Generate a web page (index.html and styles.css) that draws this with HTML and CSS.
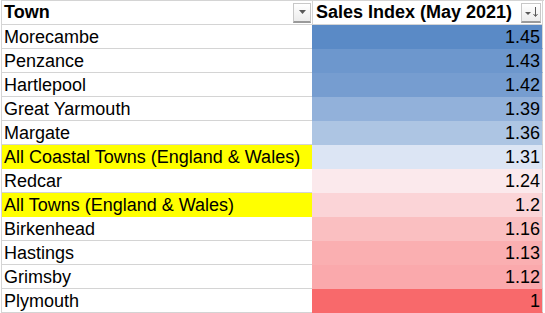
FILE: index.html
```html
<!DOCTYPE html>
<html lang="en">
<head>
    <meta charset="UTF-8">
    <title>Sales Index</title>
    <link rel="stylesheet" href="styles.css">
</head>
<body>
    <div class="sheet">
        <div class="row header">
            <div class="cell town">
                <span>Town</span>
                <span class="filter">
                    <svg width="7" height="4" viewBox="0 0 7 4"><path d="M0 0h7L3.5 4z" fill="#595959"/></svg>
                </span>
            </div>
            <div class="cell value">
                <span>Sales Index (May 2021)</span>
                <span class="filter sorted">
                    <svg width="16" height="14" viewBox="0 0 16 14"><path d="M2 7h6L5 10z" fill="#595959"/><path d="M12.5 2v9M10.5 9l2 2.5 2-2.5" stroke="#595959" stroke-width="1" fill="none"/></svg>
                </span>
            </div>
        </div>
        <div class="row">
            <div class="cell town">Morecambe</div>
            <div class="cell value" style="background-color: rgb(90,138,198)">1.45</div>
        </div>
        <div class="row">
            <div class="cell town">Penzance</div>
            <div class="cell value" style="background-color: rgb(109,151,205)">1.43</div>
        </div>
        <div class="row">
            <div class="cell town">Hartlepool</div>
            <div class="cell value" style="background-color: rgb(118,157,208)">1.42</div>
        </div>
        <div class="row">
            <div class="cell town">Great Yarmouth</div>
            <div class="cell value" style="background-color: rgb(146,177,218)">1.39</div>
        </div>
        <div class="row">
            <div class="cell town">Margate</div>
            <div class="cell value" style="background-color: rgb(173,197,227)">1.36</div>
        </div>
        <div class="row">
            <div class="cell town highlight">All Coastal Towns (England &amp; Wales)</div>
            <div class="cell value" style="background-color: rgb(220,229,244)">1.31</div>
        </div>
        <div class="row">
            <div class="cell town">Redcar</div>
            <div class="cell value" style="background-color: rgb(251,233,236)">1.24</div>
        </div>
        <div class="row">
            <div class="cell town highlight">All Towns (England &amp; Wales)</div>
            <div class="cell value" style="background-color: rgb(251,212,215)">1.2</div>
        </div>
        <div class="row">
            <div class="cell town">Birkenhead</div>
            <div class="cell value" style="background-color: rgb(250,191,193)">1.16</div>
        </div>
        <div class="row">
            <div class="cell town">Hastings</div>
            <div class="cell value" style="background-color: rgb(250,175,177)">1.13</div>
        </div>
        <div class="row">
            <div class="cell town">Grimsby</div>
            <div class="cell value" style="background-color: rgb(250,169,172)">1.12</div>
        </div>
        <div class="row">
            <div class="cell town">Plymouth</div>
            <div class="cell value" style="background-color: rgb(248,105,107)">1</div>
        </div>
    </div>
</body>
</html>
```

FILE: styles.css
```css
body {
    margin: 0;
    background-color: white;
    font-family: "Liberation Sans", Arial, sans-serif;
    font-size: 18px;
    color: #000;
}
.sheet {
    margin-left: 1px;
    width: 542px;
    border-left: 1px solid #d4d4d4;
    border-top: 1px solid #d4d4d4;
}
.row {
    display: flex;
    height: 24px;
}
.cell {
    box-sizing: border-box;
    height: 24px;
    line-height: 23px;
    padding-top: 1px;
    border-bottom: 1px solid #d4d4d4;
    white-space: nowrap;
}
.town {
    width: 310px;
    padding-left: 2px;
}
.value {
    width: 231px;
    border-left: 1px solid transparent;
    border-right: 1px solid #d4d4d4;
    border-bottom-color: transparent;
    padding-right: 2px;
    text-align: right;
}
.highlight {
    background-color: #ffff00;
    border-bottom-color: transparent;
}
.header .cell {
    display: flex;
    align-items: center;
    font-weight: bold;
    padding-top: 0;
    border-bottom-color: #d4d4d4;
}
.header .town {
    padding-right: 1px;
}
.header .value {
    border-left-color: #d4d4d4;
    padding-left: 3px;
    padding-right: 1px;
    text-align: left;
}
.filter {
    box-sizing: border-box;
    margin-left: auto;
    width: 18px;
    height: 20px;
    display: flex;
    align-items: center;
    justify-content: center;
    border: 1px solid #c8c8c8;
    border-bottom: 2px solid #9a9a9a;
    background: linear-gradient(#ffffff, #ececec);
}
.filter.sorted {
    width: 20px;
}
```
